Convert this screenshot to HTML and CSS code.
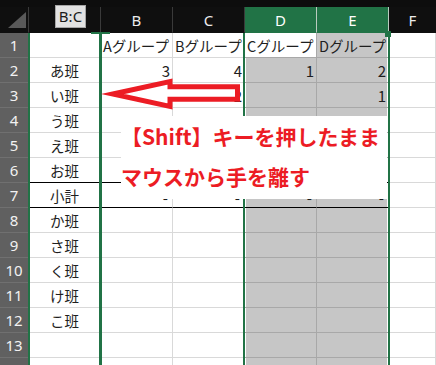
FILE: index.html
```html
<!DOCTYPE html>
<html lang="ja">
<head>
    <meta charset="UTF-8">
    <meta name="viewport" content="width=device-width, initial-scale=1.0">
    <title>列の移動</title>
    <link rel="stylesheet" href="styles.css">
</head>
<body>
    <div class="page">
        <div class="sheet">
            <!-- column headers -->
            <div class="corner">
                <svg width="28" height="25" viewBox="0 0 28 25"><polygon points="26,5 26,21 8,21" fill="#595959"/></svg>
            </div>
            <div class="colhead"></div>
            <div class="colhead">B</div>
            <div class="colhead">C</div>
            <div class="colhead sel">D</div>
            <div class="colhead sel">E</div>
            <div class="colhead last">F</div>

            <div class="rowhead">1</div>
            <div class="cell"></div>
            <div class="cell">Aグループ</div>
            <div class="cell">Bグループ</div>
            <div class="cell active">Cグループ</div>
            <div class="cell sel sel-r">Dグループ</div>
            <div class="cell"></div>

            <div class="rowhead">2</div>
            <div class="cell label">あ班</div>
            <div class="cell num">3</div>
            <div class="cell num">4</div>
            <div class="cell num sel sel-l">1</div>
            <div class="cell num sel sel-r">2</div>
            <div class="cell"></div>

            <div class="rowhead">3</div>
            <div class="cell label">い班</div>
            <div class="cell num"></div>
            <div class="cell num">2</div>
            <div class="cell num sel sel-l"></div>
            <div class="cell num sel sel-r">1</div>
            <div class="cell"></div>

            <div class="rowhead">4</div>
            <div class="cell label">う班</div>
            <div class="cell num">2</div>
            <div class="cell num"></div>
            <div class="cell num sel sel-l">1</div>
            <div class="cell num sel sel-r"></div>
            <div class="cell"></div>

            <div class="rowhead">5</div>
            <div class="cell label">え班</div>
            <div class="cell num"></div>
            <div class="cell num"></div>
            <div class="cell num sel sel-l"></div>
            <div class="cell num sel sel-r"></div>
            <div class="cell"></div>

            <div class="rowhead">6</div>
            <div class="cell label pre-total">お班</div>
            <div class="cell num pre-total"></div>
            <div class="cell num pre-total"></div>
            <div class="cell num sel sel-l pre-total"></div>
            <div class="cell num sel sel-r pre-total"></div>
            <div class="cell"></div>

            <div class="rowhead">7</div>
            <div class="cell label total">小計</div>
            <div class="cell num dash total">-</div>
            <div class="cell num dash total">-</div>
            <div class="cell num dash sel sel-l total">-</div>
            <div class="cell num dash sel sel-r total">-</div>
            <div class="cell"></div>

            <div class="rowhead">8</div>
            <div class="cell label">か班</div>
            <div class="cell"></div>
            <div class="cell"></div>
            <div class="cell sel sel-l"></div>
            <div class="cell sel sel-r"></div>
            <div class="cell"></div>

            <div class="rowhead">9</div>
            <div class="cell label">さ班</div>
            <div class="cell"></div>
            <div class="cell"></div>
            <div class="cell sel sel-l"></div>
            <div class="cell sel sel-r"></div>
            <div class="cell"></div>

            <div class="rowhead">10</div>
            <div class="cell label">く班</div>
            <div class="cell"></div>
            <div class="cell"></div>
            <div class="cell sel sel-l"></div>
            <div class="cell sel sel-r"></div>
            <div class="cell"></div>

            <div class="rowhead">11</div>
            <div class="cell label">け班</div>
            <div class="cell"></div>
            <div class="cell"></div>
            <div class="cell sel sel-l"></div>
            <div class="cell sel sel-r"></div>
            <div class="cell"></div>

            <div class="rowhead">12</div>
            <div class="cell label">こ班</div>
            <div class="cell"></div>
            <div class="cell"></div>
            <div class="cell sel sel-l"></div>
            <div class="cell sel sel-r"></div>
            <div class="cell"></div>

            <div class="rowhead">13</div>
            <div class="cell"></div>
            <div class="cell"></div>
            <div class="cell"></div>
            <div class="cell sel sel-l"></div>
            <div class="cell sel sel-r"></div>
            <div class="cell"></div>

            <div class="rowhead">14</div>
            <div class="cell"></div>
            <div class="cell"></div>
            <div class="cell"></div>
            <div class="cell sel sel-l"></div>
            <div class="cell sel sel-r"></div>
            <div class="cell"></div>
        </div>

        <!-- drag indicators -->
        <div class="range-tip">B:C</div>
        <div class="vline line-a"></div>
        <div class="vline line-b"></div>
        <div class="vline line-d"></div>
        <div class="vline line-e"></div>
        <div class="drag-mark"></div>
        <div class="handle"></div>

        <svg class="arrow" width="436" height="365" viewBox="0 0 436 365">
            <polygon points="112.8,94 170,81.6 170,86.8 237.5,86.8 237.5,99.2 170,99.2 170,106.4"
                     fill="#fff" stroke="#ec1c24" stroke-width="5" stroke-miterlimit="10"/>
        </svg>

        <div class="note">
            <p>【Shift】キーを押したまま</p>
            <p>マウスから手を離す</p>
        </div>
    </div>
</body>
</html>
```

FILE: styles.css
```css
body {
    margin: 0;
    background-color: #0d0d0d;
    overflow: hidden;
    font-family: "Noto Sans CJK JP", sans-serif;
}

.page {
    position: relative;
    width: 436px;
    height: 365px;
    padding-top: 7px;
    box-sizing: border-box;
    overflow: hidden;
}

.sheet {
    display: grid;
    grid-template-columns: 29px repeat(5, 72px) 1fr;
    grid-template-rows: 26px;
    grid-auto-rows: 25px;
}

.sheet > div {
    box-sizing: border-box;
    display: flex;
    align-items: center;
    white-space: nowrap;
    overflow: hidden;
}

.corner,
.colhead {
    background-color: #0f0f0f;
    border-right: 1px solid #3a3a3a;
    border-bottom: 1px solid #0f0f0f;
}

.colhead {
    justify-content: center;
    color: #ececec;
    font-family: "Noto Sans", sans-serif;
    font-size: 15px;
}

.colhead.sel {
    background-color: #217346;
    border-bottom-color: #217346;
    border-right-color: #b9cbbf;
    color: #fff;
}

.colhead.last {
    border-right: none;
}

.rowhead {
    justify-content: center;
    background-color: #606060;
    color: #f2f2f2;
    font-family: "Noto Sans", sans-serif;
    font-size: 15px;
    border-right: 1px solid #3d3d3d;
    border-bottom: 1px solid #707070;
}

.cell {
    background-color: #fff;
    color: #1e1e1e;
    font-size: 14.5px;
    padding: 0 2px;
    border-right: 1px solid #d9d9d9;
    border-bottom: 1px solid #d9d9d9;
}

.cell.label {
    justify-content: center;
}

.cell.num {
    justify-content: flex-end;
    font-size: 15px;
}

.cell.dash {
    padding-right: 4px;
    padding-top: 4px;
}

.cell.sel {
    background-color: #c6c6c6;
    border-color: #a8a8a8;
}

.cell.sel-l {
    box-shadow: inset 1px 0 0 #fff;
}

.cell.sel-r {
    box-shadow: inset -1px 0 0 #fff;
}

.cell.active {
    border-right-color: #a8a8a8;
    border-bottom-color: #a8a8a8;
}

.cell.pre-total,
.cell.total {
    border-bottom-color: #000;
}

/* overlays while dragging */
.range-tip {
    position: absolute;
    left: 55px;
    top: 5px;
    width: 31px;
    height: 23px;
    box-sizing: border-box;
    background-color: #e2e2e2;
    border: 1px solid #a6a6a6;
    color: #1a1a1a;
    font-family: "Noto Sans", sans-serif;
    font-size: 15px;
    line-height: 21px;
    text-align: center;
}

.vline {
    position: absolute;
    top: 33px;
    bottom: 0;
    width: 2px;
    background-color: #217346;
}

.line-a { left: 28px; }
.line-b { left: 99px; width: 3px; }
.line-d { left: 243px; }
.line-e { left: 388px; top: 35px; }

.drag-mark {
    position: absolute;
    left: 91px;
    top: 32px;
    width: 19px;
    height: 2px;
    background-color: #217346;
}

.handle {
    position: absolute;
    left: 385px;
    top: 31px;
    width: 6px;
    height: 6px;
    background-color: #217346;
}

.arrow {
    position: absolute;
    left: 0;
    top: 0;
    pointer-events: none;
}

.note {
    position: absolute;
    left: 121px;
    top: 116px;
    width: 266px;
    height: 83px;
    background-color: #fff;
    color: #ec1c24;
    font-weight: bold;
    font-size: 21px;
    line-height: 40px;
}

.note p {
    margin: 0;
    white-space: nowrap;
}
```
